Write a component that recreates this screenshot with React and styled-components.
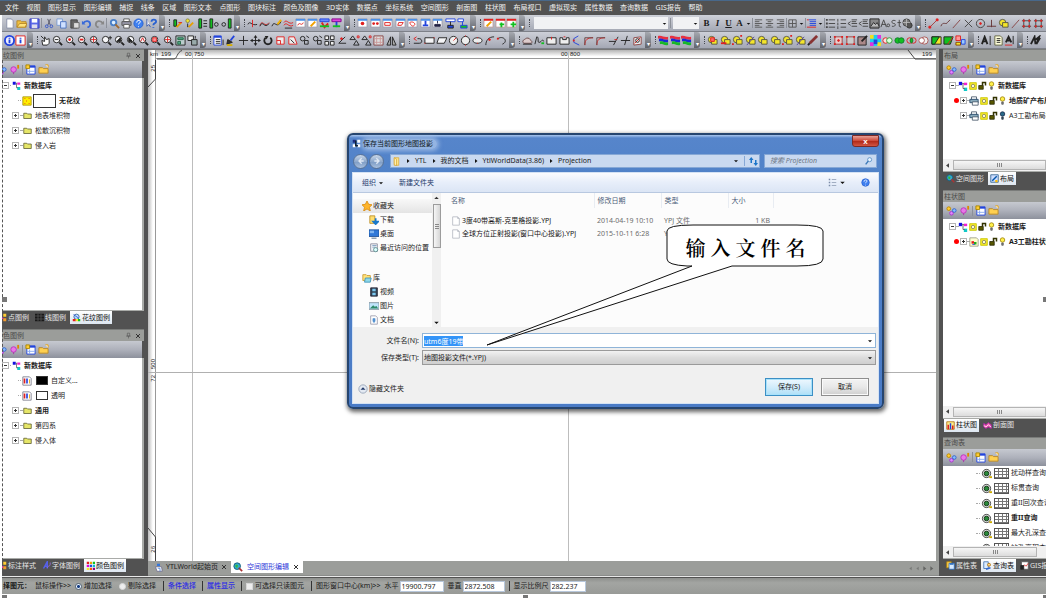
import React, { useEffect, useRef } from 'react';
import styled, { createGlobalStyle, css } from 'styled-components';

const sans = '"Noto Sans", "Noto Sans CJK SC", sans-serif';

const Global = createGlobalStyle`
  *, *::before, *::after { box-sizing: border-box; }
  body { margin: 0; background: #fff; font: 7px/10px ${sans}; color: #1c1c1c; overflow: hidden; }
  button, input, select { font: inherit; color: inherit; margin: 0; padding: 0; border: 0; border-radius: 0; background: none; outline: none; }
  ul { list-style: none; margin: 0; padding: 0; }
  a { text-decoration: none; }
`;

/* ---------- icons: each part is [path, stroke, fill, stroke width] on a 12 x 12 grid ---------- */

const K = '#222';
const R = '#e02020';
const G = '#12c020';
const B = '#2244dd';
const Y = '#f4e52a';
const N = 'none';
const circle = (x, y, r) => `M${x - r} ${y}a${r} ${r} 0 1 0 ${2 * r} 0a${r} ${r} 0 1 0 ${-2 * r} 0z`;
const lens = [[circle(5, 5, 3.5), K, '#f6f6f8'], ['M8 8l3 3', K, N, 2]];
const windowBox = [['M1 1h10v9H1z', '#99a', '#fff'], ['M1 2h10', '#4a90e8', N, 2]];
const redWindow = [['M1 1h10v9H1z', '#b99', '#fff'], ['M1 2h10', R, N, 2]];
const overlap = [[circle(5, 5, 3.5), '#554', Y], ['M5 5h6v5H5z', '#554', Y]];

const icons = {
  page: [['M3 1h5l2 2v8H3z', '#8a92a8', '#fff']],
  file: [['M2 1h6l2 2v8H2z', '#b4b8c0', '#fff'], ['M8 1v2h2', '#b4b8c0']],
  open: [['M1 10V3h4l1 1h5v6z', '#b8892a', '#f0c040'], ['M1 10l3-4h8l-2 4z', '#b8892a', '#ffe27a']],
  pathFolder: [['M3 1h6v10H3z', '#d8a838', '#ffe48a'], ['M3 1l3 2v9l-3-2z', '#d8a838', '#fff0b0']],
  save: [['M1 1h10v10H1z', '#3a40c0', '#5a68e8'], ['M3 1h6v4H3z', N, '#fff'], ['M3 7h6v4H3z', N, '#dde']],
  cut: [['M4 1l3 7M7 1L4 8', '#556'], [circle(3, 9, 1.5), '#35c'], [circle(8, 9, 1.5), '#35c']],
  copy: [['M1 1h6v7H1z', '#7a9ad0', '#e8f0ff'], ['M5 4h6v7H5z', '#4a72c0', '#cfe0ff']],
  paste: [['M2 2h7v9H2z', '#444', '#666'], ['M5 5h6v6H5z', '#666', '#ddd']],
  undo: [['M2 6c3-4 8-3 8 1c0 2-2 3-3 3', '#3a6ad8', N, 2], ['M1 3v4h4z', N, '#3a6ad8']],
  redo: [['M10 6c-3-4-8-3-8 1c0 2 2 3 3 3', '#888', N, 2], ['M11 3v4H7z', N, '#888']],
  search: [[circle(5, 5, 3), '#4a80c8', '#dff0ff', 2], ['M7 7l4 4', '#a06a30', N, 2]],
  print: [['M3 1h6v3H3z', '#555', '#fff'], ['M1 4h10v4H1z', '#555', '#99a'], ['M3 7h6v4H3z', '#555', '#fff']],
  help: [[circle(6, 6, 5), '#2a62d0', '#3f80f0'], ['M4 5c0-3 4-3 4-1c0 2-2 1-2 3M6 9v1', '#fff']],
  what: [['M1 1v8l2-2 2 3', '#35a', '#fff'], ['M6 4c0-3 5-3 5 0c0 2-3 1-3 4M8 10v1', '#2a62d0', N, 2]],
  snapA: [['M2 2h3v7H2z', K, G], ['M5 10l5-5', '#e8a000', N, 2], ['M7 5h4', R]],
  snapB: [[circle(4, 3, 2), '#884', Y], ['M5 10l5-5', '#e8a000', N, 2], ['M4 6v4', K]],
  snapC: [['M2 1h3v10H2z', K, G], ['M7 3h4M7 6h4M7 9h4', K]],
  snapD: [['M1 1h3v10H1z', K, G], [circle(8, 7, 2), K]],
  snapE: [[circle(3, 7, 2), K], ['M8 1h3v10H8z', K, G]],
  curveA: [['M1 7c2-5 4 2 10 0', K], ['M6 2v8', R]],
  curveB: [['M1 8c3-8 5 4 10-3', '#d03030'], ['M1 9c3-8 5 4 10-3', K]],
  curveC: [['M1 9c3-8 5 4 10-5', K], ['M7 7l4-5', '#f0b000', N, 2]],
  curveD: [['M1 5c3-5 5 3 10 0M1 8c3-5 5 3 10 0', R], ['M2 11h8', K]],
  winA: [...windowBox, ['M3 8c2-5 4 2 6-3', R]],
  winB: [...windowBox, ['M4 9l5-5', '#f0a000', N, 2]],
  winC: [['M1 1h10v3H1z', B, '#68f'], ['M3 5l3 5 4-4', R, N, 2], ['M1 9h10', G, N, 2]],
  winD: [['M1 1h10v3H1z', '#808', '#d4d'], ['M6 4v6', B, N, 2], ['M2 9h8', G, N, 2]],
  dot: [...windowBox, [circle(6, 6, 2), N, R]],
  dots: [...windowBox, [circle(4, 6, 1.5), N, R], [circle(8, 6, 1.5), N, R]],
  wrect: [...windowBox, ['M3 5h6v3H3z', R]],
  wpoly: [...windowBox, ['M4 5h5l-2 3H3z', R]],
  wloop: [...windowBox, ['M3 5c3-2 7 1 5 3s-4 0-5-3', R]],
  wdown: [...windowBox, ['M6 3v5M3 8h6', B, N, 2]],
  wstamp: [...windowBox, ['M6 3v3M3 7h6v2H3z', '#224', '#224']],
  flowA: [['M1 1h10v3H1z', B, '#fff'], ['M6 4v4M3 8h6v3H3z', K, B]],
  flowB: [['M1 1h6v3H1z', B, '#fff'], ['M6 4v4M4 8h7v3H4z', B, G]],
  redA: [...redWindow, ['M4 9l5-5', '#f0a000', N, 2]],
  redB: [...redWindow, ['M7 5v5M5 7h5', G, N, 2]],
  redC: [...redWindow, ['M8 4v6M5 7h6', G, N, 2]],
  left: [['M2 2h8M2 4h5M2 6h8M2 8h5M2 10h8', '#555']],
  center: [['M2 2h8M4 4h4M2 6h8M4 8h4M2 10h8', '#555']],
  right: [['M2 2h8M5 4h5M2 6h8M5 8h5M2 10h8', '#555']],
  frame: [['M2 2h8v8H2zM6 2v8M2 6h8', '#555']],
  indent: [['M3 2h8M4 4h7M4 6h7M4 8h7', B], ['M1 2h2M1 10h10', R]],
  bullets: [['M4 2h7M4 6h7M4 10h7', '#444'], ['M1 2h2M1 6h2M1 10h2', '#444', N, 2]],
  numbers: [['M5 2h6M5 6h6M5 10h6', '#444'], ['M2 1v3M2 5v3M2 9v3', '#444']],
  outdent: [['M5 2h6M5 4h5M5 6h6M5 9h6M4 4L1 6l3 2', '#444']],
  photo: [['M1 1h10v10H1z', K, '#888'], ['M2 9l3-4 2 2 2-2 2 4', K, '#bbb']],
  textA: [['M1 10l3-8 3 8M2 7h4', '#444'], [circle(9, 8, 1.5), '#444']],
  strike: [['M5 3c-5-2-5 3-2 3s2 4-2 3M9 2v7l2 1M7 5h4', '#444']],
  globe: [[circle(5, 5, 4), '#444', '#777'], [circle(8, 8, 3), '#333', '#555'], ['M1 5h8M5 1v8', '#bbb']],
  segment: [['M2 10L10 2', '#a04040'], ['M1 9h2v2H1zM9 1h2v2H9z', R, R]],
  wave: [['M1 9c2-6 6-1 7-4l3-3', '#633']],
  cross: [['M2 2l8 8M10 2l-8 8', '#444']],
  target: [[circle(6, 6, 4.5), '#444'], [circle(6, 6, 1), R, R]],
  perp: [['M6 2v8M1 9h10', '#633']],
  stack: overlap,
  slash: [['M2 11l8-9', '#844']],
  crop: [['M3 1v10M9 1v10M1 3h10M1 9h10', '#444'], ['M3 3h0M9 3h0M3 9h0M9 9h0', R, N, 2]],
  info: [[circle(6, 6, 5), B, '#eef', 2], ['M6 3v1M6 5v4', B, N, 2]],
  mark: [['M1 1h10v10H1z', R, '#fff'], ['M6 3v1M6 5v4', B, N, 2]],
  hand: [['M3 11L2 6l3 1V2l2 3 3-1v5l-2 2z', K, '#fff'], ['M1 1l3 3', K]],
  zoomMinus: [...lens, ['M3 5h4', K]],
  zoomRed: [...lens, [circle(5, 5, 1.5), N, R]],
  zoomPlus: [...lens, ['M3 5h4', R, N, 2]],
  zoomGrid: [...lens, ['M2 5h6M5 2v6', R]],
  zoomNote: [...lens, ['M10 1v4M8 3h4', K]],
  zoomDark: [...lens, ['M3 7l4-4v4z', K, K]],
  zoomFlip: [...lens, ['M3 3l4 4H3z', K, K]],
  zoomA: [...lens, ['M3 7l2-4 2 4', R]],
  zoomHatch: [...lens, ['M3 3h4v4H3z', R, '#f99']],
  view: [['M1 1h10v10H1z', K, '#bcc'], ['M3 3h6v2H3zM3 7h3v3H3z', '#264', '#5a8']],
  windows: [['M1 1h6v5H1z', K, '#eee'], ['M5 5h6v6H5z', K, '#9aa'], ['M9 1v3', K]],
  list: [['M1 1h8v10H1z', B, '#fff'], ['M1 2h8', B, N, 2], ['M3 5h5M3 7h5M3 9h5', K], ['M11 5v6', K]],
  brush: [['M10 1L6 6', B, N, 2], ['M2 10l1-5 5 3z', '#222', '#333'], ['M2 11h6', '#d8b000', N, 2]],
  plus: [['M6 1v10M1 6h10', K, N, 1]],
  move: [['M6 2v8M2 6h8', K], ['M6 0l2 3H4zM6 12l2-3H4zM0 6l3 2V4zM12 6L9 8V4z', N, K]],
  rotate: [['M9 3a4 4 0 1 1-5 0', K, N, 2], ['M3 1h4L5 5z', N, K]],
  scale: [['M2 2h8v8H2zM2 6h4v4', R, '#eee']],
  skew: [['M2 2h6l3 8H2z', R, '#eee'], ['M4 5l4 4', K]],
  copies: [[circle(4, 4, 2.5), K], ['M6 6h4v4H6zM8 1l3 2', K]],
  arr: [['M1 1h4v4H1zM7 1h4v4H7zM1 7h4v4H1zM7 7h4v4H7z', K, '#eee']],
  angle: [['M10 2L3 9h8', K], [circle(6, 4, 1), R, R]],
  mirror: [['M5 2v9H1zM7 2v9h4z', K, '#aaa']],
  triangles: [['M4 1L1 5h6zM8 6l-3 5h6z', K], ['M9 1h2v2H9z', R]],
  redgrid: [['M1 1h10v10H1z', '#844', '#ddd'], ['M4 1v10M8 1v10M1 4h10M1 8h10', '#c99']],
  path: [['M2 9h6c4 0 3-5 0-5H6', K], ['M5 2l-3 2 3 2', R]],
  rect: [['M1 3h10v6H1z', K, '#f4f4f6'], ['M1 9h0M11 3h0', R, N, 1]],
  para: [['M3 3h9l-3 6H1z', K, '#f4f4f6']],
  circ: [[circle(6, 6, 4.5), K, '#eee'], ['M6 6l3-3', R]],
  disk: [[circle(6, 6, 4.5), K, '#eee'], ['M6 1h0M6 11h0', R, N, 1]],
  ellipse: [['M1 6c0-4 10-4 10 0s-10 4-10 0z', K, '#eee'], ['M6 3h0M6 9h0', R, N, 1]],
  arc: [['M2 11c0-5 3-9 9-9', K], [circle(6, 5, 1), R, R]],
  hook: [['M2 4c6-4 12 3 5 6', K], ['M2 4h0', R, N, 2]],
  cloud: [['M2 9c-3-3 1-4 2-5s4-1 5 1 3 2 1 4z', '#644', '#dcc'], ['M1 10h10', K]],
  freehand: [['M1 10L3 2c3 0 0 7 3 6s2-4 5-1', K], ['M8 9h3', G, N, 2]],
  bracket: [['M1 3h10v7H1z', K, '#eee'], ['M6 2v3', R]],
  arch: [['M1 10V3h3v2h4V3h3v7z', K, '#eee'], ['M5 2h2', R, N, 1]],
  dash: [['M8 1L3 4v4l6 3', B, N, 1], ['M2 6h2', R, N, 2]],
  corner: [['M2 11C2 5 5 3 11 3', R], ['M2 11V3h9', '#644']],
  trim: [['M1 7h7M6 11l5-9', K], ['M7 5h3', R]],
  extend: [['M1 6h10M5 11l3-10', K]],
  patch: [['M2 3l8-1v8l-8 1z', '#844', '#eee'], ['M3 9l6-6', R], [circle(6, 6, 2), K]],
  layers: [['M0 1c5-1 6 2 11 1v3C6 6 5 3 0 4z', N, '#e83040'], ['M1 4c5-1 5 2 10 1v3C6 9 6 6 1 7z', N, '#1a2ad8'], ['M2 7c5-1 5 2 9 1v3c-5 1-4-2-9-1z', N, '#18b828']],
  merge: [...overlap, ['M4 3h4v4H4z', R, '#f66']],
  mergeB: [...overlap, ['M1 9h6', R, N, 2]],
  mergeC: [...overlap, ['M1 10h0M10 1h0', R, N, 2]],
  mergeD: [...overlap, ['M2 11l8-9', '#549']],
  cutter: [['M11 1L3 9', '#833', N, 3], ['M3 9l-2 2', K, N, 2]],
  node: [['M2 2h8v8H2z', '#944', '#ecc'], ['M2 2h0M10 2h0M2 10h0M10 10h0', R, N, 2], [circle(6, 6, 1), R, R]],
  nodeB: [['M2 2h8v8H2z', '#944', '#ccc'], ['M2 2h0M10 2h0M2 10h0M10 10h0', R, N, 2]],
  nodeC: [['M1 2h9v9H1z', K, '#a88'], ['M5 7l6-6', K, N, 2]],
  puzzle: [['M0 0h12v12H0z', N, '#1ad0f0'], ['M0 0h4v4H0zM8 8h4v4H8z', N, '#f0e020'], ['M8 0h4v4H8zM0 8h4v4H0z', N, '#e030e0'], ['M4 5h4v5H4z', N, B]],
  venn: [[circle(4, 6, 3), R, '#fdd'], [circle(8, 6, 3), '#393', '#dfd']],
  vennG: [[circle(4, 6, 3), '#173', G], [circle(8, 6, 3), '#173', G]],
  vennM: [[circle(4, 6, 3), R, N], [circle(8, 6, 3), R, N], ['M6 3c2 2 2 4 0 6c-2-2-2-4 0-6', '#173', G]],
  vennL: [[circle(7, 6, 4), '#a55', '#eee'], [circle(4, 6, 3), '#a55', '#fff']],
  split: [['M1 2h10v8H1z', K, Y], ['M1 2h8l-5 8H1z', K, G]],
  splitB: [['M1 2h10l-3 8H1z', K, G], ['M5 10l6-8', R]],
  blocks: [['M1 1h5v5H1z', R, '#f99'], ['M7 5h4v5H7z', B, '#9cf'], ['M1 8h5v3H1z', '#840', Y]],
  letterA: [['M1 10l3-8 3 8M2 7h4', K, N, 2], ['M10 1v10', K]],
  sheet: [['M2 1h6l2 2v8H2z', '#664', '#ffd'], ['M4 4h4M4 6h4M4 8h4', K]],
  letterU: [['M2 8l3-6 3 6M3 6h4', K, N, 2], ['M1 11h8', R], ['M10 1v9', K]],
  italicA: [['M1 10l4-8 1 8M5 6l5-4-3 8 4-7', K, N, 2]],
  gems: [[circle(3, 4, 2), '#b80', '#fc3'], [circle(6, 9, 2), '#a3c', '#d8f'], [circle(9, 6, 2), '#36c', '#8bf']],
  ball: [[circle(5, 6, 3), '#b3b', '#e878e8'], ['M10 1v4', '#d80', N, 2], ['M5 9v2', '#a3a']],
  props: [['M2 2h9v9H2z', B, '#fff'], ['M2 3h9', B, N, 2], ['M1 1h4v4H1z', '#a80', '#fc3'], ['M5 6v5M2 8h9', '#8ae']],
  newFolder: [['M1 10V4h4l1 1h5v5z', '#b8892a', '#ffd050'], ['M8 1h3v3', '#e8a000', '#fff']],
  db: [['M1 1h4v4H1z', N, '#1010e0'], ['M7 2h4v3H7z', N, '#f020d0'], ['M7 8h4v4H7z', N, '#10c8c8'], ['M5 3h2M6 3v6h2', '#555']],
  folder: [['M1 10V3h4l1 1h5v6z', '#55552a', '#e6e668']],
  pattern: [['M1 1h10v10H1z', '#a89000', '#ffee00'], ['M3 3h1M8 3h1M5 6h1M3 9h1M8 9h1', R, N, 1]],
  colors: [['M1 1h8l2 2v8H1z', '#778', '#fff'], ['M3 3v6', R, N, 2], ['M6 3v6', B, N, 2], ['M9 4v5', '#f0a000', N, 1]],
  sun: [['M2 2h8v8H2z', '#c8c800', Y], [circle(6, 6, 2), '#886', '#fffcd0']],
  lock: [['M1 6h6v5H1z', '#220', '#565600'], ['M6 6V2h4v4', '#330', N, 2]],
  bulb: [[circle(6, 4, 3), '#987a00', '#fff04a'], ['M5 8h2v3H5z', '#555', '#888']],
  bulbOff: [[circle(6, 4, 3), '#124', '#2a6a8a'], ['M5 8h2v3H5z', '#234', '#456']],
  layout: [['M3 1h6v4H3z', '#456', '#fff'], ['M1 4h10v4H1z', '#246', '#8ab'], ['M4 7h7v4H4z', '#456', '#fff']],
  chart: [['M1 1h8l2 2v8H1z', '#998', '#ffc'], ['M3 5h3v3H3z', N, R], ['M6 6h3v3H6z', N, '#2a2'], ['M4 9h3', B]],
  eye: [[circle(6, 6, 4.5), '#444', '#ddd'], [circle(6, 6, 2.5), '#131', '#2a8a3a'], ['M9 10h3', '#ca0', N, 2]],
  points: [['M1 1h4v4H1z', N, '#e83'], ['M4 6h3v4H4z', N, '#d3a'], ['M7 1h4v4H7z', N, '#fc3'], ['M7 7h4v4H7z', N, '#f39a2c']],
  lines: [['M0 1h12v10H0z', N, '#181818'], ['M0 4h12M0 8h12M4 1v10M8 1v10', '#555']],
  bucket: [[circle(6, 5, 3.5), '#258', '#bdf'], ['M2 2l7 5', B], ['M1 8h4v3H1z', N, R], ['M5 8h3v3H5z', N, Y], ['M8 8h3v3H8z', N, G]],
  fontTab: [['M2 10L7 1v9M4 7h4', '#5560e8', N, 2], ['M7 9c3-5 4 0 4-7', '#a070e8']],
  palette: [['M1 1h3v3H1z', N, R], ['M5 1h3v3H5z', N, '#f0a000'], ['M9 1h3v3H9z', N, G], ['M1 5h3v3H1z', N, '#d0d'], ['M5 5h3v3H5z', N, B], ['M9 5h3v3H9z', N, '#0bc'], ['M1 9h3v3H1z', N, Y], ['M5 9h3v3H5z', N, '#f50'], ['M9 9h3v3H9z', N, '#808']],
  earth: [[circle(5, 5, 4), '#157', '#3ac'], ['M3 3l3 1-1 3-2-1z', N, '#3b3'], ['M7 7l4 4', '#a33', N, 2]],
  layoutTab: [['M1 1h10v10H1z', '#258', '#cdf'], ['M3 9l6-6', '#05a', N, 2], ['M7 8h3v3H7z', N, '#fb0']],
  columnTab: [['M1 1h10v10H1z', '#a60', '#fe8'], ['M3 5v6', R, N, 2], ['M6 3v8', B, N, 2], ['M9 6v5', R, N, 2]],
  sectionTab: [['M1 3l3 2 3-3 4 3v5l-4-2-3 2-3-2z', '#a2a', '#e5a'], ['M1 6l3 2 3-3 4 3', '#fff']],
  attrTab: [['M1 1h6v8H1z', '#b80', '#ffd050'], ['M4 3h7v8H4z', '#26b', '#d8ebff'], ['M5 4h5', '#26b', N, 2]],
  queryTab: [['M1 1h6v9H1z', '#36a', '#dcecff'], [circle(8, 5, 2), '#a60', '#fd8'], ['M4 11l6-2', '#36c', N, 2]],
  reportTab: [['M2 1h9v10H2z', '#555', '#fff'], ['M3 9l3-4 2 2 3-4', R], ['M1 6h4v5H1z', K, K]],
  app: [['M1 1h4v4H1z', N, '#1b2c80'], ['M7 1h4v4H7z', N, '#fff'], ['M1 7h4v4H1z', N, '#fff'], ['M7 7h4v4H7z', N, '#fff'], ['M5 2v7h3', '#123', N, 2]],
  user: [['M4 1h4v3H4z', N, '#37d'], ['M2 5l8 0 1 6H4z', '#668', '#fff'], ['M5 7h3v4', '#37d']],
  star: [['M6 0l2 4 4 .5-3 3 1 4.500-4-2.500-4 2.500 1-4.500-3-3L4 4z', '#d88a10', '#ffb52a']],
  download: [['M1 1h6v9H1z', '#b98a20', '#ffdf70'], ['M8 4v5M5 8l3 3 3-3z', '#1a78c8', '#2a90e8', 2]],
  desktop: [['M0 1h12v8H0z', '#1c4f98', '#2f78d8'], ['M1 2h5v3H1z', N, '#7fb4f0'], ['M3 11h6', '#357']],
  recent: [['M2 1h8v9H2z', '#889', '#f2f4f8'], ['M4 3h5M4 5h4', '#79b'], [circle(8, 8, 2.5), '#588', '#dff']],
  library: [['M1 9V2h4l1 1h4v6z', '#c89a30', '#ffe27a'], ['M4 6h7l-1 5H3z', '#3a90b8', '#8fd8e8']],
  video: [['M2 1h8v10H2z', '#223', '#345'], ['M4 2h4v3H4zM4 7h4v3H4z', N, '#7cc8f0']],
  picture: [['M0 2h12v8H0z', '#7a8a98', '#bfe4fa'], ['M1 9l4-4 2 2 2-1 2 3z', N, '#2d8a6a']],
  doc: [['M2 1h6l2 2v8H2z', '#99a', '#fff'], ['M4 5h4M4 7h4', '#48c'], ['M6 4v5', '#48c', N, 2]],
  viewMode: [['M1 2h2M1 6h2M1 10h2', '#7a8aa8', N, 2], ['M5 2h6M5 6h6M5 10h6', '#8a98b0']],
  refresh: [['M3 8V2', '#1b74c8', N, 2], ['M0 4l3-4 3 4z', N, '#1b74c8'], ['M9 4v5', '#1b74c8', N, 2], ['M6 8h6l-3 4z', N, '#1b74c8']],
  find: [[circle(7, 4, 3), '#3a78b8', '#e8f4ff', 1], ['M5 6l-4 5', '#3a78b8', N, 2]],
  upDisc: [[circle(6, 6, 5), '#93a0b4', '#e3e9f2'], ['M3 7l3-3 3 3z', N, '#223a6a']],
  caret: [['M3 5h6L6 8z', N, '#111']],
  caretUp: [['M3 8h6L6 5z', N, '#333']],
  caretRight: [['M4 2v8l5-4z', N, '#111']],
  caretLeft: [['M8 3v6L4 6z', N, '#444']],
  pin: [['M4 2h4v5H4zM2 7h8M6 7v4', '#555']],
  close: [['M2 2l8 8M10 2l-8 8', '#333', N, 2]],
  arrowLeft: [['M7 2L3 6l4 4M3 6h7', '#dfe8f4', N, 2]],
  arrowRight: [['M5 2l4 4-4 4M9 6H2', '#dfe8f4', N, 2]],
};

const Svg = styled.svg`
  display: block;
  flex: none;
  width: ${(p) => p.$size}px;
  height: ${(p) => p.$size}px;
`;

const Icon = ({ name, size = 10 }) => (
  <Svg viewBox="0 0 12 12" $size={size} aria-hidden="true">
    {icons[name].map(([d, stroke, fill = N, w = 1], i) => (
      <path key={i} d={d} stroke={stroke} fill={fill} strokeWidth={w} strokeLinecap={d.includes('h0') ? 'square' : 'butt'} />
    ))}
  </Svg>
);

/* ---------- frame ---------- */

const Page = styled.div`
  position: relative;
  display: flex;
  flex-direction: column;
  min-height: 100vh;
  padding: 0 0 4px 2px;
  overflow: hidden;
`;

const MenuBar = styled.nav`
  height: 15px;
  background: #525252;
  border-top: 1px solid #48688a;
  margin-left: -2px;
  padding-left: 5px;
`;

const MenuList = styled.div`
  width: 67%;
  height: 14px;
  display: flex;
  justify-content: space-between;
  align-items: center;
`;

const MenuButton = styled.button`
  color: #f2f2f2;
  white-space: nowrap;
`;

const ToolRow = styled.div`
  display: flex;
  height: 17px;
  border-bottom: 1px solid #7d8088;
  background: #8b8e95;
`;

const ToolGroup = styled.div`
  flex: ${(p) => p.$w} 1 0;
  min-width: 0;
  display: flex;
  align-items: stretch;
  background: linear-gradient(#cdd0d8, #b9bcc6 50%, #a4a8b4);
  overflow: hidden;
`;

const Grip = styled.span`
  flex: none;
  width: 5px;
  margin: 4px 0;
  border-right: 1px dotted #44474e;
`;

const Cap = styled.span`
  flex: none;
  width: 6px;
  display: flex;
  align-items: flex-end;
  justify-content: center;
  color: #fff;
  font-size: 6px;
  line-height: 8px;
  background: linear-gradient(#a6a9b0, #61646c);
  border-radius: 0 3px 3px 0;
`;

const Tools = styled.div`
  flex: 1;
  min-width: 0;
  display: flex;
  align-items: center;
  justify-content: space-between;
  padding: 0 2px;
`;

const ToolButton = styled.button`
  flex: none;
  display: flex;
  align-items: center;
  justify-content: center;
  min-width: ${(p) => (p.$narrow ? 6 : 11)}px;
  height: 14px;
  ${(p) => p.$letter && css`
    font: 700 9px/12px "Liberation Serif", serif;
    font-style: ${p.$letter === 'I' ? 'italic' : 'normal'};
    text-decoration: ${p.$letter === 'U' ? 'underline' : 'none'};
  `}
`;

const Divider = styled.span`
  flex: none;
  width: 1px;
  height: 10px;
  background: ${(p) => p.$color || '#8c9099'};
`;

const ToolSelectBox = styled.label`
  position: relative;
  flex: ${(p) => p.$w} 1 0;
  display: flex;
  align-items: center;
  height: 12px;
  margin: 0 2px;
  background: #f1f2f4;
`;

const PlainSelect = styled.select`
  appearance: none;
  flex: 1;
  min-width: 0;
  height: 100%;
`;

const letters = ['B', 'I', 'U', 'A'];

const Tool = ({ name }) => {
  if (name === '|') return <Divider />;
  if (name === 'caret') return <ToolButton $narrow aria-label="more"><Icon name="caret" size={7} /></ToolButton>;
  if (name.startsWith('select')) {
    return (
      <ToolSelectBox $w={Number(name.slice(6))}>
        <PlainSelect aria-label={name === 'select104' ? 'font' : 'size'} />
        <Icon name="caret" size={7} />
      </ToolSelectBox>
    );
  }
  if (letters.includes(name)) return <ToolButton $letter={name}>{name}</ToolButton>;
  return <ToolButton aria-label={name}><Icon name={name} size={11} /></ToolButton>;
};

const ToolBar = ({ groups }) => (
  <ToolRow role="toolbar">
    {groups.map(([w, names], i) => (
      <ToolGroup key={i} $w={w}>
        {i > 0 && <Grip />}
        <Tools>{names.split(' ').map((n, j) => <Tool key={j} name={n} />)}</Tools>
        {i < groups.length - 1 && <Cap>▾</Cap>}
      </ToolGroup>
    ))}
  </ToolRow>
);

const toolsTop = [
  [163, 'page open save | cut copy paste undo redo | search print help what'],
  [75, 'snapA snapB snapC snapD snapE'],
  [110, 'curveA curveB curveC curveD winA winB winC winD'],
  [126, 'dot dots wrect wpoly wloop wdown wstamp flowA flowB'],
  [49, 'redA redB redC'],
  [396, 'select104 | select20 B I U A caret | left center right | frame caret | indent caret | bullets numbers outdent outdent photo textA strike globe'],
  [125, 'segment wave slash cross target perp stack slash crop crop'],
];

const toolsBottom = [
  [31, 'info mark'],
  [173, 'hand zoomMinus zoomRed zoomPlus zoomGrid zoomNote zoomDark zoomFlip zoomA zoomHatch zoomGrid view windows'],
  [199, 'list brush plus move rotate scale skew copies copies arr angle triangles triangles redgrid mirror'],
  [110, 'path rect para circ disk ellipse arc hook'],
  [136, 'cloud freehand bracket arch dash corner corner trim extend patch'],
  [49, 'layers layers layers'],
  [126, 'merge mergeB mergeC mergeD stack stack mergeC mergeD cutter'],
  [148, 'node nodeB nodeC puzzle venn vennG vennM vennL split splitB blocks'],
  [49, 'letterA sheet letterU'],
  [23, 'italicA'],
];

const menus = '文件 视图 图形显示 图形编辑 捕捉 线条 区域 图形文本 点图形 图块标注 颜色及图像 3D实体 数据点 坐标系统 空间图形 剖面图 柱状图 布局视口 虚拟现实 属性数据 查询数据 GIS报告 帮助'.split(' ');

const Workspace = styled.main`
  flex: 1;
  min-height: 0;
  display: grid;
  grid-template-columns: 142px minmax(0, 1fr) 103px;
  column-gap: 4px;
  background: #525252;
  border-bottom: 1px solid #e8e8e8;
`;

const Column = styled.div`
  display: flex;
  flex-direction: column;
  gap: 1px;
  min-width: 0;
  min-height: 0;
`;

/* ---------- docked panels ---------- */

const PanelBox = styled.section`
  flex: ${(p) => p.$grow} 1 0;
  min-height: 0;
  display: flex;
  flex-direction: column;
  background: #525252;
`;

const PanelTitle = styled.header`
  flex: none;
  display: flex;
  align-items: center;
  justify-content: space-between;
  height: 12px;
  padding: 0 3px 0 1px;
  color: #4b4b4b;
  background: #9b9d9a;
  border-top: 1px solid #7a7c7a;
`;

const TitleButtons = styled.span`
  display: flex;
  gap: 3px;
`;

const PanelTools = styled.div`
  flex: none;
  display: flex;
  align-items: center;
  gap: 2px;
  height: 17px;
  margin-right: ${(p) => (p.$cut ? 2 : 0)}px;
  padding-left: ${(p) => (p.$cut ? 0 : 3)}px;
  overflow: hidden;
  background: linear-gradient(#c6c9d0, #aeb1bb 50%, #8d919c);
  & > :first-child { margin-left: ${(p) => (p.$cut ? -6 : 0)}px; }
`;

const Frame = styled.div`
  flex: 1;
  min-height: 0;
  display: flex;
  flex-direction: column;
  background: #fff;
  border: solid #a9aba8;
  border-width: 0 ${(p) => (p.$cut ? 2 : 0)}px 1px 0;
`;

const Tree = styled.ul`
  flex: 1;
  min-height: 0;
  overflow: hidden;
`;

const Row = styled.li`
  display: flex;
  align-items: center;
  gap: ${(p) => (p.$tight ? 0 : 1)}px;
  height: 15px;
  padding-left: ${(p) => p.$pad}px;
  white-space: nowrap;
  font-weight: ${(p) => (p.$bold ? 700 : 400)};
`;

const Label = styled.span`
  margin-left: 2px;
`;

const Toggle = styled.button`
  flex: none;
  width: 7px;
  height: 7px;
  border: 1px solid #b4b4b4;
  background:
    linear-gradient(#333, #333) center / 3px 1px no-repeat,
    linear-gradient(#333, #333) center / ${(p) => (p.$minus ? 0 : 1)}px 3px no-repeat,
    #fff;
`;

const Dash = styled.span`
  flex: none;
  width: ${(p) => p.$w}px;
  border-top: 1px dotted #aaa;
`;

const Swatch = styled.span`
  flex: none;
  width: ${(p) => (p.$big ? 23 : 12)}px;
  height: ${(p) => (p.$big ? 14 : 9)}px;
  margin-left: ${(p) => (p.$big ? 0 : 3)}px;
  border: 1px solid #333;
  background: ${(p) => p.$color};
`;

const RedDot = styled.span`
  flex: none;
  width: 5px;
  height: 5px;
  margin-right: 1px;
  border-radius: 50%;
  background: #f00;
`;

const Mesh = styled.span`
  flex: none;
  width: 15px;
  height: 11px;
  margin: 0 1px;
  border: 1px solid #555;
  background:
    repeating-linear-gradient(90deg, transparent 0 3px, #777 3px 4px),
    repeating-linear-gradient(#fff 0 2px, #777 2px 3px);
`;

const HScroll = styled.div`
  flex: none;
  display: flex;
  align-items: center;
  gap: 1px;
  height: 12px;
  background: #f0f0f0;
`;

const HThumb = styled.span`
  flex: ${(p) => (p.$short ? '0 1 84px' : '1')};
  height: 10px;
  display: flex;
  align-items: center;
  justify-content: center;
  border: 1px solid #b4b4b4;
  background: linear-gradient(#f6f6f6, #dcdcdc);
  &::after {
    content: '';
    width: 5px;
    height: 4px;
    background: repeating-linear-gradient(90deg, #888 0 1px, transparent 1px 2px);
  }
`;

const Tabs = styled.div`
  flex: none;
  display: flex;
  align-items: flex-start;
  gap: 2px;
  height: 17px;
  padding-left: ${(p) => (p.$cut ? 0 : 1)}px;
  overflow: hidden;
  & > :first-child { margin-left: ${(p) => (p.$cut ? -6 : 0)}px; }
`;

const Tab = styled.button`
  flex: none;
  display: flex;
  align-items: center;
  gap: 1px;
  height: 13px;
  padding: 0 2px;
  white-space: nowrap;
  color: ${(p) => (p.$on ? '#111' : '#e6e6e6')};
  background: ${(p) => (p.$on ? 'linear-gradient(#fff, #dde6f0)' : 'none')};
`;

const Panel = ({ grow, title, cut, tabs, scroll, children }) => (
  <PanelBox $grow={grow}>
    <PanelTitle>
      {title}
      {cut && (
        <TitleButtons>
          <button aria-label="pin"><Icon name="pin" size={7} /></button>
          <button aria-label="close"><Icon name="close" size={6} /></button>
        </TitleButtons>
      )}
    </PanelTitle>
    <PanelTools $cut={cut}>
      {['gems', 'ball', '|', 'props', 'newFolder'].map((n) => <Tool key={n} name={n} />)}
    </PanelTools>
    <Frame $cut={cut}>
      <Tree>{children}</Tree>
      {scroll && (
        <HScroll>
          <Icon name="caretLeft" size={9} />
          <HThumb $short={scroll === 'short'} />
        </HScroll>
      )}
    </Frame>
    <Tabs $cut={cut} role="tablist">
      {tabs.map(([icon, text, on]) => (
        <Tab key={text} role="tab" $on={on}><Icon name={icon} size={9} />{text}</Tab>
      ))}
    </Tabs>
  </PanelBox>
);

const RootRow = () => (
  <Row $bold $pad={0}><Toggle $minus aria-label="collapse" /><Dash $w={1} /><Icon name="db" size={9} /><Label>新数据库</Label></Row>
);

const FolderRow = ({ text, bold }) => (
  <Row $bold={bold} $pad={10}><Toggle aria-label="expand" /><Dash $w={2} /><Icon name="folder" size={9} /><Label>{text}</Label></Row>
);

const LayerRow = ({ icon, text, bold, dot, off, root }) => (
  <Row $tight $bold={bold} $pad={root ? 6 : dot ? 11 : 17}>
    {dot && <RedDot />}
    <Toggle $minus={root} aria-label="toggle" />
    <Dash $w={2} />
    <Icon name={icon} size={10} />
    <Icon name="sun" size={10} />
    <Icon name="lock" size={9} />
    <Icon name={off ? 'bulbOff' : 'bulb'} size={9} />
    <Label>{text}</Label>
  </Row>
);

const QueryRow = ({ text, bold }) => (
  <Row $bold={bold} $pad={33}><Dash $w={4} /><Icon name="eye" size={11} /><Mesh /><span>{text}</span></Row>
);

/* ---------- drawing area ---------- */

const Center = styled.div`
  display: flex;
  flex-direction: column;
  min-width: 0;
  background: #9b9d9a;
`;

const Sheet = styled.div`
  flex: 1;
  position: relative;
  margin-right: 3px;
  background: #fff;
  border-top: 1px solid #777;
  overflow: hidden;
`;

const RulerTop = styled.div`
  position: absolute;
  inset: 0 0 auto 0;
  height: 9px;
  background: linear-gradient(#b4b4b4, #fff 80%);
  border-bottom: 1px solid #999;
`;

const RulerLeft = styled.div`
  position: absolute;
  inset: 0 auto 0 0;
  width: 8px;
  background: linear-gradient(90deg, #bbb, #fff 70%);
  border-right: 1px solid #999;
`;

const Tick = styled.span`
  position: absolute;
  left: ${(p) => p.$x}px;
  top: ${(p) => p.$y}px;
  font: 6px/8px "Liberation Sans", sans-serif;
  writing-mode: ${(p) => (p.$turn ? 'sideways-lr' : 'horizontal-tb')};
  padding: 0 1px;
`;

const VLine = styled.span`
  position: absolute;
  top: 0;
  bottom: 0;
  left: ${(p) => p.$x};
  border-left: 1px solid #bdbdbd;
`;

const HLine = styled.span`
  position: absolute;
  left: 0;
  right: 0;
  top: ${(p) => p.$y};
  border-top: 1px solid #b0b0b0;
`;

const Notch = styled.svg`
  position: absolute;
  left: ${(p) => p.$x};
  top: ${(p) => p.$y};
  width: ${(p) => p.$w}px;
  height: ${(p) => p.$h}px;
`;

const DocTabs = styled.div`
  flex: none;
  display: flex;
  align-items: stretch;
  height: 15px;
  border-bottom: 1px solid #8a8c8a;
  padding-left: 4px;
`;

const DocTab = styled.div`
  display: flex;
  align-items: center;
  gap: ${(p) => (p.$on ? 4 : 3)}px;
  padding: 0 4px 0 2px;
  color: ${(p) => (p.$on ? '#2a34d8' : '#222')};
  background: ${(p) => (p.$on ? '#fff' : 'none')};
  margin-bottom: 2px;
`;

const DocArrows = styled.span`
  display: flex;
  align-items: center;
  margin-left: auto;
  padding-right: 4px;
  opacity: 0.4;
`;

/* ---------- status bar ---------- */

const Status = styled.footer`
  display: flex;
  align-items: center;
  gap: 4px;
  height: 17px;
  border-top: 1px solid #525252;
  background: linear-gradient(#8e908d, #a3a5a2 30%, #989a97);
  padding-left: 1px;
  white-space: nowrap;
`;

const Option = styled.label`
  display: flex;
  align-items: center;
  gap: 2px;
  margin-right: 3px;
`;

const Mark = styled.input`
  appearance: none;
  width: 7px;
  height: 7px;
  border: 1px solid #d8d8d8;
  border-radius: ${(p) => (p.type === 'radio' ? '50%' : '0')};
  background: #eee;
  &:checked { background: radial-gradient(#123a80 0 1px, #e8f2ff 2px); border-color: #567; }
`;

const Field = styled.label`
  display: flex;
  align-items: center;
  gap: 1px;
`;

const NumberBox = styled.input`
  width: ${(p) => p.$w}px;
  height: 11px;
  padding-left: 1px;
  background: #fff;
  border: 1px solid #b8c8dc;
`;

const Link = styled.a`
  margin-right: 2px;
  color: #2c2ce4;
  font-weight: 500;
`;

/* ---------- save dialog ---------- */

const Dialog = styled.div`
  position: absolute;
  left: 347px;
  top: 133px;
  width: 537px;
  display: flex;
  flex-direction: column;
  padding: 2px 3px 3px;
  border: 2px solid #26456f;
  border-radius: 6px;
  background: linear-gradient(#a9c6ee, #5685cb 3px, #5082c8 40px, #4a7bc6);
  box-shadow: 1px 2px 4px 1px rgba(0, 0, 0, 0.6);
`;

const DialogTitle = styled.header`
  display: flex;
  align-items: center;
  gap: 2px;
  height: 13px;
  color: #101820;
`;

const TitleText = styled.span`
  padding: 0 4px 0 0;
  border-radius: 5px;
  background: rgba(190, 212, 242, 0.6);
  box-shadow: 0 0 4px 2px rgba(190, 212, 242, 0.6);
`;

const CloseButton = styled.button`
  display: flex;
  align-items: center;
  justify-content: center;
  align-self: flex-start;
  width: 27px;
  height: 12px;
  margin: -2px 0 0 auto;
  border: 1px solid #7c2a26;
  border-radius: 0 0 3px 3px;
  background: linear-gradient(#e6a096, #cc4433 50%, #b02818 51%, #d25542);
  color: #fff;
  font: 700 8px/9px "Liberation Sans", sans-serif;
`;

const Address = styled.div`
  display: flex;
  align-items: center;
  gap: 4px;
  height: 22px;
  padding: 0 2px 0 1px;
`;

const NavDisc = styled.button`
  display: flex;
  align-items: center;
  justify-content: center;
  width: 15px;
  height: 15px;
  margin-right: -3px;
  border: 1px solid #5a7396;
  border-radius: 50%;
  background: linear-gradient(#c8d6e8, #8ea9cc 50%, #7c9bc4 51%, #a9c0de);
`;

const PathBar = styled.div`
  flex: 1;
  display: flex;
  align-items: center;
  gap: 4px;
  height: 14px;
  margin-left: 5px;
  padding-left: 1px;
  border: 1px solid #86a8d6;
  background: #c9d9f0;
  white-space: nowrap;
`;

const PathEnd = styled.span`
  display: flex;
  align-items: center;
  gap: 4px;
  margin-left: auto;
  padding-right: 1px;
`;

const SearchBox = styled.label`
  display: flex;
  align-items: center;
  width: 113px;
  height: 14px;
  padding: 0 3px 0 5px;
  border: 1px solid #86a8d6;
  background: #c9d9f0;
`;

const SearchInput = styled.input`
  flex: 1;
  min-width: 0;
  font-style: italic;
  &::placeholder { color: #6d7684; opacity: 1; }
`;

const Client = styled.div`
  border: 1px solid #d4e2f4;
  background: #f0f0f0;
`;

const CommandBar = styled.div`
  display: flex;
  align-items: center;
  gap: 14px;
  height: 20px;
  padding: 0 8px 0 9px;
  color: #1e3a6a;
  background: linear-gradient(#fbfcfe, #e7eefa 50%, #dbe5f5);
  border-bottom: 1px solid #b8c8e0;
`;

const Command = styled.button`
  display: flex;
  align-items: center;
  gap: 1px;
  margin-left: ${(p) => (p.$end ? 'auto' : 0)};
`;

const Browser = styled.div`
  display: grid;
  grid-template-columns: 79px 9px minmax(0, 1fr);
  height: 134px;
  background: #fcfcfc;
`;

const Places = styled.ul`
  padding-top: 6px;
`;

const Place = styled.li`
  display: flex;
  align-items: center;
  gap: 1px;
  height: 14px;
  padding-left: ${(p) => (p.$root ? 9 : 16)}px;
  white-space: nowrap;
  overflow: hidden;
  margin-top: ${(p) => (p.$space ? 16 : 0)}px;
  background: ${(p) => (p.$on ? 'linear-gradient(#f8f8f8, #e4e4e4)' : 'none')};
`;

const VScroll = styled.div`
  display: flex;
  flex-direction: column;
  align-items: center;
  background: #f0f0f0;
`;

const VThumb = styled.span`
  display: flex;
  align-items: center;
  justify-content: center;
  width: 8px;
  height: 44px;
  margin: 2px 0 auto;
  border: 1px solid #9c9c9c;
  background: linear-gradient(90deg, #f6f6f6, #d6d6d6);
  &::after {
    content: '';
    width: 4px;
    height: 5px;
    background: repeating-linear-gradient(#888 0 1px, transparent 1px 2px);
  }
`;

const Files = styled.table`
  border-collapse: collapse;
  table-layout: fixed;
  width: 332px;
  height: 47px;
  align-self: start;
  th, td { padding: 0 3px; font-weight: 400; text-align: left; white-space: nowrap; color: #6c6c6c; }
  th { height: 15px; color: #4c607a; border-right: 1px solid #e8ecf2; }
  td { height: 13px; }
  th:first-child, td:first-child { padding-left: 10px; }
  td:first-child { color: #151515; }
  td:last-child { text-align: right; }
  tbody::before { content: ''; display: table-row; height: 6px; }
`;

const FileName = styled.span`
  display: flex;
  align-items: center;
  gap: 1px;
`;

const Form = styled.form`
  display: grid;
  grid-template-columns: 69px minmax(0, 1fr);
  row-gap: 2px;
  padding: 6px 2px 7px 0;
`;

const FormLabel = styled.label`
  display: flex;
  align-items: center;
  justify-content: flex-end;
  padding-right: 3px;
`;

const Combo = styled.div`
  display: flex;
  align-items: center;
  height: 15px;
  padding: 0 1px;
  border: 1px solid ${(p) => (p.$flat ? '#9a9a9a' : '#8fb4d8')};
  background: ${(p) => (p.$flat ? 'linear-gradient(#f2f2f2, #dcdcdc 50%, #cfcfcf)' : '#fff')};
`;

const NameInput = styled.input`
  flex: 1;
  height: 11px;
  min-width: 0;
  caret-color: transparent;
  &::selection { color: #fff; background: #3394f8; }
`;

const Actions = styled.div`
  grid-column: 1 / -1;
  display: flex;
  align-items: center;
  gap: 8px;
  height: 18px;
  margin-top: 11px;
  padding: 0 7px 0 5px;
`;

const Hide = styled.button`
  display: flex;
  align-items: center;
  gap: 1px;
  margin-right: auto;
  padding-top: 4px;
`;

const PushButton = styled.button`
  width: 48px;
  height: 18px;
  border: 1px solid ${(p) => (p.$main ? '#3c8fc4' : '#8e8e8e')};
  box-shadow: inset 0 0 0 1px ${(p) => (p.$main ? '#a8e2fb' : '#fafafa')};
  background: ${(p) => (p.$main ? 'linear-gradient(#eef8fe, #d2ecfa 50%, #aee0f8)' : 'linear-gradient(#f3f3f3, #e8e8e8 50%, #cfcfcf)')};
`;

/* ---------- annotation ---------- */

const Callout = styled.div`
  position: absolute;
  left: 487px;
  top: 224px;
  width: 337px;
  height: 122px;
`;

const CalloutShape = styled.svg`
  position: absolute;
  inset: 0;
`;

const CalloutText = styled.div`
  position: relative;
  margin-left: 180px;
  width: 157px;
  text-align: center;
  color: #000;
  font: 600 20px/47px "Noto Serif CJK SC", "Noto Sans CJK SC", serif;
  white-space: nowrap;
`;

const Guide = styled.span`
  position: absolute;
  left: 2px;
  top: 60px;
  bottom: 22px;
  border-left: 1px dashed #555;
`;

const Handle = styled.span`
  position: absolute;
  left: ${(p) => p.$x};
  top: ${(p) => p.$y};
  width: 5px;
  height: 5px;
  background: #777;
`;

const places = [
  ['star', '收藏夹', { $root: true, $on: true }],
  ['download', '下载', {}],
  ['desktop', '桌面', {}],
  ['recent', '最近访问的位置', {}],
  ['library', '库', { $root: true, $space: true }],
  ['video', '视频', {}],
  ['picture', '图片', {}],
  ['doc', '文档', {}],
];

const files = [
  ['3度40带高斯-克里格投影.YPJ', '2014-04-19 10:10', 'YPJ 文件', '1 KB'],
  ['全球方位正射投影(窗口中心投影).YPJ', '2015-10-11 6:28', 'YPJ', ''],
];

function SaveDialog() {
  const nameRef = useRef(null);
  useEffect(() => {
    nameRef.current.focus();
    nameRef.current.select();
  }, []);
  return (
    <Dialog role="dialog" aria-label="保存当前图形地图投影">
      <DialogTitle>
        <Icon name="app" size={9} />
        <TitleText>保存当前图形地图投影</TitleText>
        <CloseButton aria-label="close">x</CloseButton>
      </DialogTitle>
      <Address>
        <NavDisc aria-label="back"><Icon name="arrowLeft" size={8} /></NavDisc>
        <NavDisc aria-label="forward"><Icon name="arrowRight" size={8} /></NavDisc>
        <PathBar>
          <Icon name="pathFolder" size={9} />
          {['YTL', '我的文档', 'YtlWorldData(3.86)', 'Projection'].map((p) => (
            <React.Fragment key={p}><Icon name="caretRight" size={6} /><span>{p}</span></React.Fragment>
          ))}
          <PathEnd><Icon name="caret" size={8} /><Divider $color="#86a8d6" /><Icon name="refresh" size={9} /></PathEnd>
        </PathBar>
        <SearchBox>
          <SearchInput placeholder="搜索 Projection" aria-label="搜索" />
          <Icon name="find" size={8} />
        </SearchBox>
      </Address>
      <Client>
        <CommandBar>
          <Command>组织<Icon name="caret" size={8} /></Command>
          <Command>新建文件夹</Command>
          <Command $end aria-label="view"><Icon name="viewMode" size={9} /><Icon name="caret" size={9} /></Command>
          <Command aria-label="help"><Icon name="help" size={9} /></Command>
        </CommandBar>
        <Browser>
          <Places>
            {places.map(([icon, text, opts]) => (
              <Place key={text} {...opts}><Icon name={icon} size={10} />{text}</Place>
            ))}
          </Places>
          <VScroll><Icon name="caretUp" size={9} /><VThumb /><Icon name="caret" size={9} /></VScroll>
          <Files>
            <colgroup><col width="153" /><col width="67" /><col width="67" /><col width="45" /></colgroup>
            <thead><tr><th>名称</th><th>修改日期</th><th>类型</th><th>大小</th></tr></thead>
            <tbody>
              {files.map(([n, ...rest]) => (
                <tr key={n}>
                  <td><FileName><Icon name="file" size={10} />{n}</FileName></td>
                  {rest.map((c, i) => <td key={i}>{c}</td>)}
                </tr>
              ))}
            </tbody>
          </Files>
        </Browser>
        <Form onSubmit={(e) => e.preventDefault()}>
          <FormLabel htmlFor="name">文件名(N):</FormLabel>
          <Combo><NameInput id="name" ref={nameRef} defaultValue="utm6度19带" /><Icon name="caret" size={8} /></Combo>
          <FormLabel htmlFor="type">保存类型(T):</FormLabel>
          <Combo $flat><PlainSelect id="type"><option>地图投影文件(*.YPJ)</option></PlainSelect><Icon name="caret" size={8} /></Combo>
          <Actions>
            <Hide type="button"><Icon name="upDisc" size={10} />隐藏文件夹</Hide>
            <PushButton $main type="submit">保存(S)</PushButton>
            <PushButton type="button">取消</PushButton>
          </Actions>
        </Form>
      </Client>
    </Dialog>
  );
}

const Bar = () => <Divider $color="#333" />;

export default function App() {
  return (
    <>
      <Global />
      <Page>
        <MenuBar><MenuList>{menus.map((m) => <MenuButton key={m}>{m}</MenuButton>)}</MenuList></MenuBar>
        <ToolBar groups={toolsTop} />
        <ToolBar groups={toolsBottom} />
        <Workspace>
          <Column>
            <Panel grow={280} title="纹图例" cut
              tabs={[['points', '点图例'], ['lines', '线图例'], ['bucket', '花纹图例', true]]}>
              <RootRow />
              <Row $bold $pad={16}><Dash $w={3} /><Icon name="pattern" size={10} /><Swatch $big $color="#fff" /><Label>无花纹</Label></Row>
              <FolderRow text="地表堆积物" />
              <FolderRow text="松散沉积物" />
              <FolderRow text="侵入岩" />
            </Panel>
            <Panel grow={247} title="色图例" cut
              tabs={[['points', '标注样式'], ['fontTab', '字体图例'], ['palette', '颜色图例', true]]}>
              <RootRow />
              <Row $pad={16}><Dash $w={3} /><Icon name="colors" size={10} /><Swatch $color="#000" /><Label>自定义...</Label></Row>
              <Row $pad={16}><Dash $w={3} /><Icon name="colors" size={10} /><Swatch $color="#fff" /><Label>透明</Label></Row>
              <FolderRow text="通用" bold />
              <FolderRow text="第四系" />
              <FolderRow text="侵入体" />
            </Panel>
          </Column>
          <Center>
            <Sheet>
              <RulerTop />
              <RulerLeft />
              <VLine $x="44px" />
              <VLine $x="420px" />
              <HLine $y="63%" />
              <Notch $x="9px" $y="0" $w={26} $h={10} viewBox="0 0 26 10"><path d="M0 9h17c3 0 3-7 8-8.500" fill="none" stroke="#444" /></Notch>
              <Notch $x="calc(100% - 30px)" $y="0" $w={30} $h={10} viewBox="0 0 30 10"><path d="M2 0l7 9h21" fill="none" stroke="#444" /></Notch>
              <Notch $x="0" $y="10px" $w={8} $h={28} viewBox="0 0 8 28"><path d="M7.500 0v19L0 27" fill="none" stroke="#444" /></Notch>
              <Notch $x="0" $y="calc(100% - 33px)" $w={8} $h={33} viewBox="0 0 8 33"><path d="M0 0l7.500 9v24" fill="none" stroke="#444" /></Notch>
              <Tick $x={1} $y={0}>km</Tick>
              <Tick $x={12} $y={0}>199</Tick>
              <Tick $x={36} $y={0}>00</Tick>
              <Tick $x={45} $y={0}>750</Tick>
              <Tick $x={412} $y={0}>00</Tick>
              <Tick $x={421} $y={0}>800</Tick>
              <Tick $x={773} $y={0}>199</Tick>
              <Tick $turn $x={0} $y={15}>25</Tick>
              <Tick $turn $x={0} $y={309}>500</Tick>
              <Tick $turn $x={0} $y={325}>72</Tick>
              <Tick $turn $x={0} $y={496}>26</Tick>
            </Sheet>
            <DocTabs>
              <DocTab><Icon name="user" size={9} />YTLWorld起始页<button aria-label="close"><Icon name="close" size={6} /></button></DocTab>
              <DocTab $on><Icon name="earth" size={10} />空间图形编辑<button aria-label="close"><Icon name="close" size={6} /></button></DocTab>
              <DocArrows>
                <Icon name="caretLeft" size={7} /><Icon name="caretLeft" size={7} />
                <Icon name="caretRight" size={7} /><Icon name="caretRight" size={7} />
              </DocArrows>
            </DocTabs>
          </Center>
          <Column>
            <Panel grow={141} title="布局" scroll tabs={[['earth', '空间图形'], ['layoutTab', '布局', true]]}>
              <LayerRow root bold icon="db" text="新数据库" />
              <LayerRow dot bold icon="layout" text="地质矿产布局" />
              <LayerRow off icon="layout" text="A3工勘布局横" />
            </Panel>
            <Panel grow={246} title="柱状图" scroll tabs={[['columnTab', '柱状图', true], ['sectionTab', '剖面图']]}>
              <LayerRow root bold icon="db" text="新数据库" />
              <LayerRow dot bold icon="chart" text="A3工勘柱状图" />
            </Panel>
            <Panel grow={140} title="查询表" scroll="short" tabs={[['attrTab', '属性表'], ['queryTab', '查询表', true], ['reportTab', 'GIS报告']]}>
              <QueryRow text="扰动样查询" />
              <QueryRow text="标贯查询" />
              <QueryRow text="重II回次查询" />
              <QueryRow bold text="重II查询" />
              <QueryRow text="最大孔深查询" />
              <QueryRow text="钻孔高程查询" />
            </Panel>
          </Column>
        </Workspace>
        <Status>
          <b>择图元：</b>
          <span>鼠标操作&gt;&gt;</span>
          <Option><Mark type="radio" name="mode" defaultChecked />增加选择</Option>
          <Option><Mark type="radio" name="mode" />剔除选择</Option>
          <Bar /><Link href="#condition">条件选择</Link>
          <Bar /><Link href="#attributes">属性显示</Link>
          <Bar /><Option><Mark type="checkbox" />可选择只读图元</Option>
          <Bar /><span>图形窗口中心(km)&gt;&gt;</span>
          <Field>水平<NumberBox $w={44} defaultValue="19900.797" /></Field>
          <Field>垂直<NumberBox $w={42} defaultValue="2872.508" /></Field>
          <Bar /><Field>显示比例尺<NumberBox $w={36} defaultValue="282.237" /></Field>
        </Status>
        <SaveDialog />
        <Callout>
          <CalloutShape width="337" height="122" viewBox="0 0 337 122" aria-hidden="true">
            <path d="M205 42H200Q180 41 180 35V7Q180 1 206 1H310Q336 1 336 7V35Q336 42 310 42H245L0 121Z" fill="#fff" stroke="#111" />
          </CalloutShape>
          <CalloutText>输 入 文 件 名</CalloutText>
        </Callout>
        <Guide />
        <Handle $x="2px" $y="calc(50% - 2px)" />
        <Handle $x="2px" $y="calc(100% - 3px)" />
        <Handle $x="50%" $y="calc(100% - 3px)" />
        <Handle $x="calc(100% - 3px)" $y="calc(50% - 2px)" />
        <Handle $x="calc(100% - 3px)" $y="calc(100% - 3px)" />
      </Page>
    </>
  );
}
